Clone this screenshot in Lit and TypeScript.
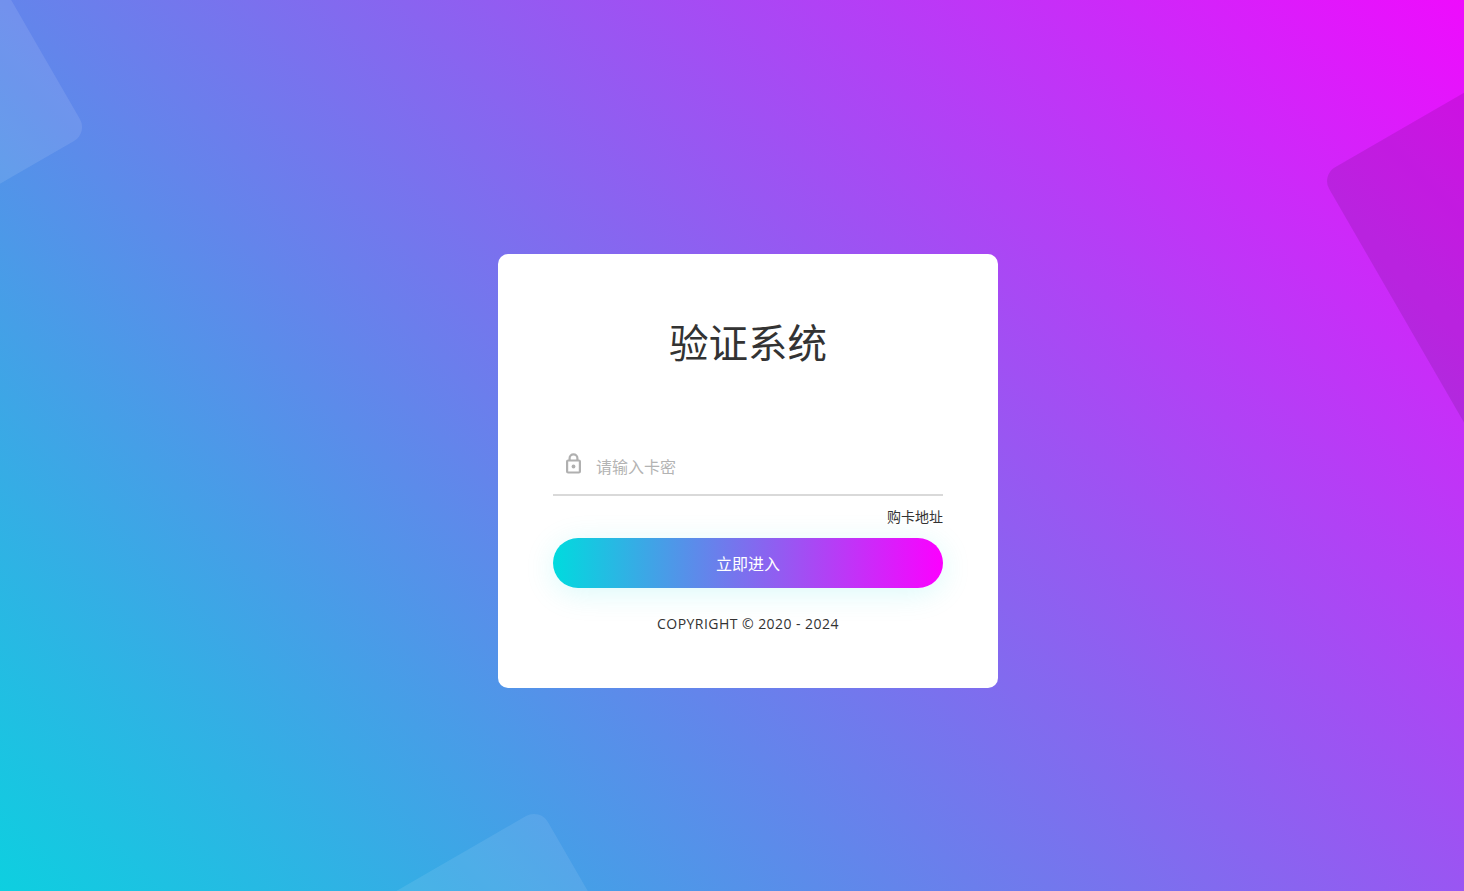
import { LitElement, html, css } from "lit";
import { customElement } from "lit/decorators.js";

@customElement("app-root")
export class AppRoot extends LitElement {
  static styles = css`
    :host {
      display: block;
      font-family: "Noto Sans CJK SC", "Open Sans", sans-serif;
      color: #333;
    }
    .stage {
      position: relative;
      box-sizing: border-box;
      width: 100%;
      height: 891px;
      overflow: hidden;
      background: linear-gradient(45deg, #00dbde -6%, #fc00ff 106%);
      padding: 254px 0 0 498px;
    }
    .shape {
      position: absolute;
      border-radius: 16px;
      transform: rotate(-30deg);
    }
    .shape-a {
      left: -267px;
      top: -72px;
      width: 300px;
      height: 300px;
      background: rgba(255, 255, 255, 0.1);
    }
    .shape-b {
      left: 1431px;
      top: -15px;
      width: 600px;
      height: 600px;
      background: rgba(0, 0, 0, 0.1);
    }
    .shape-c {
      left: 335px;
      top: 863px;
      width: 300px;
      height: 300px;
      background: rgba(255, 255, 255, 0.09);
    }
    .card {
      position: relative;
      box-sizing: border-box;
      width: 500px;
      height: 434px;
      padding: 60px 55px 0;
      background: #fff;
      border-radius: 10px;
    }
    h1 {
      margin: 0;
      font-size: 39.5px;
      font-weight: 400;
      line-height: 54px;
      text-align: center;
      color: #333;
    }
    .field {
      display: flex;
      align-items: center;
      height: 44px;
      margin-top: 76px;
      border-bottom: 2px solid #d9d9d9;
      padding: 0 0 6px 12px;
      gap: 14px;
    }
    .lock {
      flex: none;
      width: 17px;
      height: 21px;
      margin-top: -5px;
    }
    input {
      flex: 1;
      min-width: 0;
      border: 0;
      outline: 0;
      padding: 0;
      font: inherit;
      font-size: 16px;
      font-weight: 400;
      color: #333;
      background: transparent;
    }
    input::placeholder {
      color: #b3b3b3;
      opacity: 1;
    }
    .buy {
      display: block;
      margin-top: 10px;
      font-size: 14px;
      font-weight: 400;
      line-height: 20px;
      text-align: right;
      color: #333;
      text-decoration: none;
    }
    button {
      display: block;
      width: 100%;
      height: 50px;
      margin-top: 12px;
      border: 0;
      border-radius: 25px;
      padding: 0;
      font: inherit;
      font-size: 16px;
      font-weight: 400;
      color: #fff;
      background: linear-gradient(90deg, #00dbde, #fc00ff);
      box-shadow: 0 5px 30px rgba(0, 219, 222, 0.15);
    }
    .copy {
      margin-top: 25px;
      font-family: "Open Sans", "Noto Sans CJK SC", sans-serif;
      font-size: 14px;
      letter-spacing: 0.45px;
      line-height: 22px;
      text-align: center;
      color: #333;
    }
  `;

  render() {
    return html`
      <div class="stage">
        <div class="shape shape-a"></div>
        <div class="shape shape-b"></div>
        <div class="shape shape-c"></div>
        <main class="card">
          <h1>验证系统</h1>
          <label class="field">
            <svg class="lock" viewBox="0 0 17 21" fill="none" stroke="#b0b0b0" stroke-width="2.2">
              <path d="M4.6 7.5V5.2a3.9 3.9 0 0 1 7.8 0v2.3" />
              <rect x="2.1" y="7.5" width="12.8" height="12" rx="1" />
              <circle cx="8.5" cy="13.5" r="1.9" fill="#b0b0b0" stroke="none" />
            </svg>
            <input type="text" placeholder="请输入卡密" />
          </label>
          <a class="buy" href="#">购卡地址</a>
          <button type="button">立即进入</button>
          <div class="copy">COPYRIGHT © 2020 - 2024</div>
        </main>
      </div>
    `;
  }
}
